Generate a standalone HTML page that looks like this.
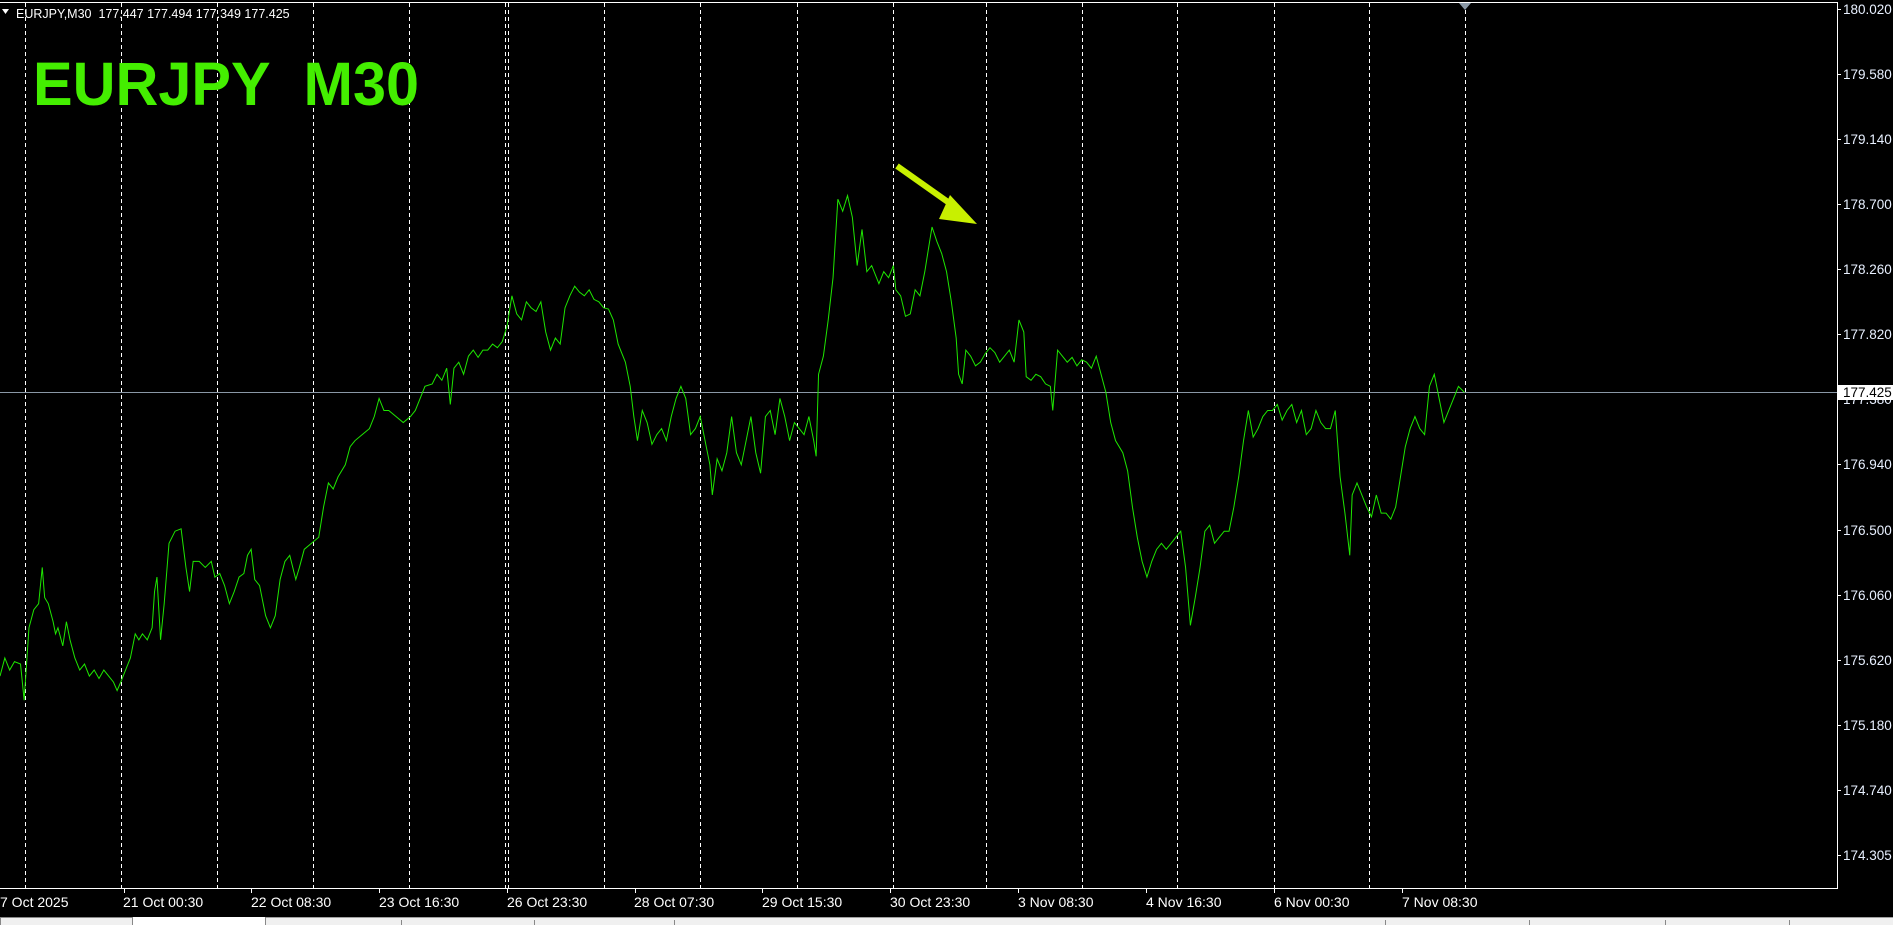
<!DOCTYPE html>
<html><head><meta charset="utf-8"><style>
html,body{margin:0;padding:0;background:#000;width:1893px;height:925px;overflow:hidden}
svg{display:block}
text{font-family:"Liberation Sans",sans-serif}
</style></head><body>
<svg width="1893" height="925" viewBox="0 0 1893 925" xmlns="http://www.w3.org/2000/svg">
<rect width="1893" height="925" fill="#000"/>
<g stroke="#fff" stroke-width="1" stroke-dasharray="4 3">
<line x1="25.5" y1="3" x2="25.5" y2="888"/><line x1="121.5" y1="3" x2="121.5" y2="888"/>
<line x1="217.5" y1="3" x2="217.5" y2="888"/><line x1="313.5" y1="3" x2="313.5" y2="888"/>
<line x1="409.5" y1="3" x2="409.5" y2="888"/><line x1="505.5" y1="3" x2="505.5" y2="888"/>
<line x1="508.5" y1="3" x2="508.5" y2="888"/><line x1="604.5" y1="3" x2="604.5" y2="888"/>
<line x1="700.5" y1="3" x2="700.5" y2="888"/><line x1="797.5" y1="3" x2="797.5" y2="888"/>
<line x1="893.5" y1="3" x2="893.5" y2="888"/><line x1="986.5" y1="3" x2="986.5" y2="888"/>
<line x1="1082.5" y1="3" x2="1082.5" y2="888"/><line x1="1177.5" y1="3" x2="1177.5" y2="888"/>
<line x1="1274.5" y1="3" x2="1274.5" y2="888"/><line x1="1369.5" y1="3" x2="1369.5" y2="888"/>
<line x1="1465.5" y1="3" x2="1465.5" y2="888"/>
</g>
<path d="M0 2.5H1837.5V888.5H0" fill="none" stroke="#fff" stroke-width="1"/>
<line x1="0" y1="392.5" x2="1837" y2="392.5" stroke="#8a98a6" stroke-width="1"/>
<path d="M1459 3L1471 3L1465 10Z" fill="#8a98a6"/>
<g transform="scale(1.2073)">
<polyline fill="none" stroke="#1ee600" stroke-width="1" vector-effect="non-scaling-stroke" points="0,560 4,545 8,555 12,548 17,550 20,580 24,520 28,505 32,500 35,470 37,495 40,500 44,515 46,525 48,520 52,535 55,515 58,530 62,545 66,555 70,550 74,560 78,555 82,562 86,555 90,560 94,565 97,572 100,565 104,555 108,545 112,525 115,530 118,525 122,530 126,520 128,490 130,478 133,530 136,500 140,450 145,440 150,438 154,470 157,490 160,465 165,465 170,470 175,465 178,478 182,475 186,485 190,500 194,490 198,478 202,475 205,460 208,455 211,480 215,485 220,510 224,520 228,510 232,480 236,465 240,460 245,480 248,470 252,455 258,450 264,445 268,420 272,400 276,405 280,395 286,385 290,370 294,365 300,360 306,355 310,345 314,330 318,340 322,340 328,345 334,350 340,345 344,340 348,330 352,320 358,318 362,310 366,315 370,305 373,335 376,305 380,300 384,310 388,295 392,290 396,296 400,290 404,290 408,285 412,288 416,283 420,270 424,245 428,260 432,265 436,250 440,255 444,258 448,250 452,275 456,290 460,280 464,285 468,255 472,245 476,237 480,242 484,245 488,240 492,248 496,250 500,255 504,256 508,265 512,285 518,300 522,320 525,345 528,365 532,340 536,350 540,368 544,360 548,355 552,365 556,345 560,330 564,320 568,330 572,360 576,355 580,345 584,365 588,385 590,410 594,380 598,390 602,375 606,345 610,375 614,385 618,365 622,345 626,375 630,392 634,345 638,340 642,360 646,330 650,345 654,365 658,350 662,355 666,360 670,345 674,365 676,378 678,310 682,295 686,265 690,230 694,165 698,175 702,162 706,180 710,220 714,190 718,225 722,220 728,235 732,225 736,230 740,220 742,240 746,245 750,262 754,260 758,240 762,245 766,225 770,200 772,188 776,200 780,210 784,225 788,250 792,280 794,310 797,318 800,290 804,295 808,303 812,300 816,293 820,288 824,292 828,300 832,295 836,290 840,300 844,265 848,275 850,312 854,315 858,310 862,312 866,318 870,320 872,340 876,290 880,295 884,300 888,296 892,303 896,298 900,300 904,305 908,295 912,310 916,325 920,350 924,365 930,375 934,390 938,420 942,445 946,465 950,478 954,465 958,455 962,450 966,455 970,450 974,445 978,440 982,470 986,518 990,495 994,470 998,440 1002,435 1006,450 1010,445 1014,440 1018,440 1022,420 1026,395 1030,365 1034,340 1038,362 1042,355 1046,345 1050,340 1054,340 1058,335 1062,348 1066,340 1070,335 1074,350 1078,340 1082,360 1086,355 1090,340 1094,350 1098,355 1102,355 1106,340 1110,395 1114,425 1118,460 1120,410 1124,400 1128,410 1132,420 1136,428 1140,410 1144,425 1148,425 1152,430 1156,420 1160,395 1164,370 1168,355 1172,345 1176,355 1180,360 1184,320 1188,310 1192,330 1196,350 1200,340 1204,330 1208,320 1213,325"/>
</g>
<line x1="897" y1="166" x2="955" y2="207" stroke="#c8f000" stroke-width="6"/>
<path d="M950 195L977 224L939 219Z" fill="#c8f000"/>
<path d="M2 9L9 9L5.5 14Z" fill="#fff"/>
<text x="16" y="18" font-size="12.5" fill="#fff">EURJPY,M30&#160; 177.447 177.494 177.349 177.425</text>
<text x="33" y="105" font-size="61" font-weight="bold" fill="#44ee00" textLength="386" lengthAdjust="spacingAndGlyphs">EURJPY&#160; M30</text>
<g stroke="#fff" stroke-width="1">
<line x1="1837" y1="9.5" x2="1841" y2="9.5"/><line x1="1837" y1="74.5" x2="1841" y2="74.5"/>
<line x1="1837" y1="139.5" x2="1841" y2="139.5"/><line x1="1837" y1="204.5" x2="1841" y2="204.5"/>
<line x1="1837" y1="269.5" x2="1841" y2="269.5"/><line x1="1837" y1="334.5" x2="1841" y2="334.5"/>
<line x1="1837" y1="464.5" x2="1841" y2="464.5"/><line x1="1837" y1="530.5" x2="1841" y2="530.5"/>
<line x1="1837" y1="595.5" x2="1841" y2="595.5"/><line x1="1837" y1="660.5" x2="1841" y2="660.5"/>
<line x1="1837" y1="725.5" x2="1841" y2="725.5"/><line x1="1837" y1="790.5" x2="1841" y2="790.5"/>
<line x1="1837" y1="855.5" x2="1841" y2="855.5"/>
</g>
<g font-size="13.5" fill="#e8f0ff">
<text x="1843" y="14">180.020</text><text x="1843" y="79">179.580</text>
<text x="1843" y="144">179.140</text><text x="1843" y="209">178.700</text>
<text x="1843" y="274">178.260</text><text x="1843" y="339">177.820</text>
<text x="1843" y="404">177.380</text>
<text x="1843" y="469">176.940</text><text x="1843" y="535">176.500</text>
<text x="1843" y="600">176.060</text><text x="1843" y="665">175.620</text>
<text x="1843" y="730">175.180</text><text x="1843" y="795">174.740</text>
<text x="1843" y="860">174.305</text>
</g>
<rect x="1838" y="385" width="55" height="15" fill="#fff"/>
<text x="1843" y="397" font-size="13.5" fill="#000">177.425</text>
<g stroke="#fff" stroke-width="1">
<line x1="124.5" y1="888" x2="124.5" y2="893"/><line x1="251.5" y1="888" x2="251.5" y2="893"/>
<line x1="379.5" y1="888" x2="379.5" y2="893"/><line x1="507.5" y1="888" x2="507.5" y2="893"/>
<line x1="635.5" y1="888" x2="635.5" y2="893"/><line x1="762.5" y1="888" x2="762.5" y2="893"/>
<line x1="890.5" y1="888" x2="890.5" y2="893"/><line x1="1018.5" y1="888" x2="1018.5" y2="893"/>
<line x1="1146.5" y1="888" x2="1146.5" y2="893"/><line x1="1274.5" y1="888" x2="1274.5" y2="893"/>
<line x1="1402.5" y1="888" x2="1402.5" y2="893"/>
</g>
<g font-size="14" fill="#fff">
<text x="0" y="907">7 Oct 2025</text>
<text x="123" y="907">21 Oct 00:30</text><text x="251" y="907">22 Oct 08:30</text>
<text x="379" y="907">23 Oct 16:30</text><text x="507" y="907">26 Oct 23:30</text>
<text x="634" y="907">28 Oct 07:30</text><text x="762" y="907">29 Oct 15:30</text>
<text x="890" y="907">30 Oct 23:30</text><text x="1018" y="907">3 Nov 08:30</text>
<text x="1146" y="907">4 Nov 16:30</text><text x="1274" y="907">6 Nov 00:30</text>
<text x="1402" y="907">7 Nov 08:30</text>
</g>
<rect x="0" y="917" width="1893" height="8" fill="#f0f0f0"/>
<line x1="0" y1="917.5" x2="1893" y2="917.5" stroke="#a0a0a0"/>
<rect x="0.5" y="917.5" width="132" height="8" fill="#f0f0f0" stroke="#888"/>
<rect x="133" y="917" width="132" height="8" fill="#fff"/>
<g stroke="#888"><line x1="265.5" y1="917" x2="265.5" y2="925"/><line x1="401.5" y1="920" x2="401.5" y2="925"/><line x1="534.5" y1="920" x2="534.5" y2="925"/><line x1="674.5" y1="920" x2="674.5" y2="925"/><line x1="1385.5" y1="920" x2="1385.5" y2="925"/><line x1="1529.5" y1="920" x2="1529.5" y2="925"/><line x1="1665.5" y1="920" x2="1665.5" y2="925"/><line x1="1789.5" y1="920" x2="1789.5" y2="925"/></g>
</svg>
</body></html>
